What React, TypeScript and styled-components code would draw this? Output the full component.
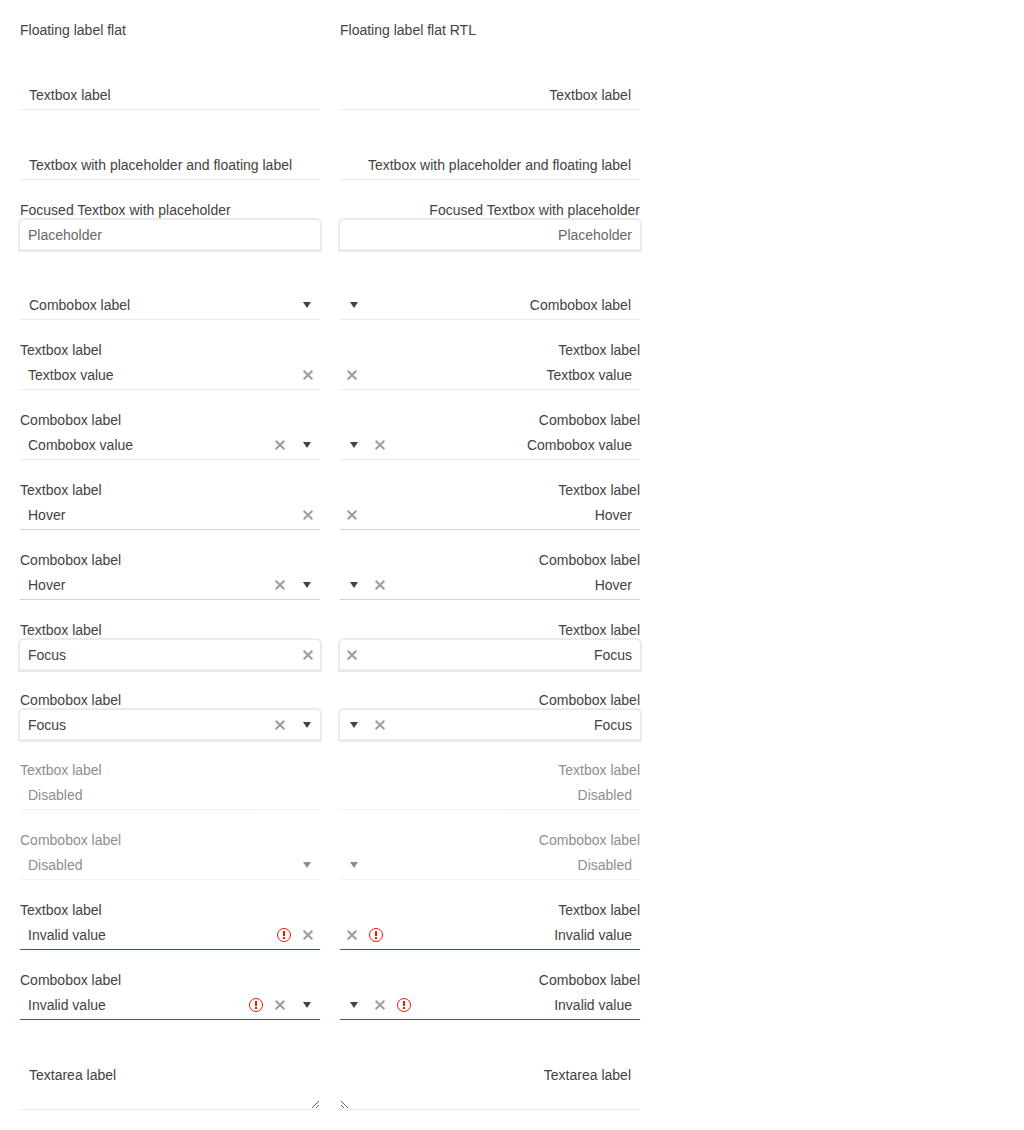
import React from 'react';
import styled, { createGlobalStyle, css } from 'styled-components';

type State = 'normal' | 'hover' | 'focus' | 'disabled' | 'invalid';
type Kind = 'textbox' | 'combobox' | 'textarea';

interface Field {
  kind: Kind;
  label: string;
  value?: string;
  placeholder?: string;
  state?: State;
}

const GlobalStyle = createGlobalStyle`
  body {
    margin: 0;
    background: #ffffff;
    color: #424242;
    font-family: "Liberation Sans", Arial, sans-serif;
    font-size: 14px;
    line-height: 20px;
  }
`;

const Page = styled.main`
  display: grid;
  grid-template-columns: 300px 300px;
  column-gap: 20px;
  padding: 20px;
`;

const Column = styled.section`
  display: flex;
  flex-direction: column;
  gap: 20px;
`;

const Heading = styled.div`
  height: 20px;
`;

const Container = styled.div<{ $disabled: boolean }>`
  display: flex;
  flex-direction: column;
  opacity: ${(p) => (p.$disabled ? 0.6 : 1)};
`;

const Label = styled.label`
  height: 20px;
  white-space: nowrap;
`;

const lineColor: Record<State, string> = {
  normal: '#ebebeb',
  hover: '#d2d2d2',
  focus: '#ebebeb',
  disabled: '#ebebeb',
  invalid: '#f31700',
};

const Box = styled.div<{ $state: State; $tall?: boolean }>`
  box-sizing: border-box;
  display: flex;
  align-items: ${(p) => (p.$tall ? 'stretch' : 'center')};
  height: ${(p) => (p.$tall ? 50 : 30)}px;
  position: relative;
  border-bottom: 1px solid ${(p) => lineColor[p.$state]};
  border-radius: ${(p) => (p.$state === 'focus' ? '4px 4px 0 0' : '0')};
  ${(p) =>
    p.$state === 'focus' &&
    css`
      box-shadow: 0 0 0 2px #ebebeb;
    `}
`;

const Value = styled.span<{ $muted: boolean }>`
  flex: 1;
  padding-inline: 8px;
  padding-top: 1px;
  color: ${(p) => (p.$muted ? '#686868' : 'inherit')};
`;

const RestingLabel = styled.span`
  flex: 1;
  padding-inline: 9px;
  padding-top: 1px;
`;

const AreaLabel = styled.span`
  position: absolute;
  top: 5px;
  inset-inline-start: 9px;
`;

const Area = styled.textarea`
  box-sizing: border-box;
  flex: 1;
  min-width: 0;
  margin: 0;
  padding: 4px 8px;
  border: 0;
  outline: 0;
  background: transparent;
  color: inherit;
  font: inherit;
  resize: both;
`;

const IconSlot = styled.span<{ $wide?: boolean; $shift?: boolean }>`
  box-sizing: border-box;
  display: flex;
  flex: none;
  align-items: center;
  justify-content: center;
  width: ${(p) => (p.$wide ? 28 : 24)}px;
  height: 30px;
  margin-bottom: -1px;
  padding-left: ${(p) => (p.$shift ? 2 : 0)}px;

  svg {
    display: block;
  }
`;

const ErrorIcon = () => (
  <IconSlot>
    <svg width="16" height="16" viewBox="0 0 16 16" fill="#f31700">
      <circle cx="8" cy="8" r="6.5" fill="none" stroke="#f31700" />
      <path d="M7 4h2v5H7zM7 10h2v2H7z" />
    </svg>
  </IconSlot>
);

const ClearIcon = () => (
  <IconSlot>
    <svg width="16" height="16" viewBox="0 0 16 16" fill="#424242" opacity="0.5">
      <path d="M13.1 4.4 11.6 2.9 8 6.5 4.4 2.9 2.9 4.4 6.5 8 2.9 11.6 4.4 13.1 8 9.5 11.6 13.1l1.5-1.5L9.5 8z" />
    </svg>
  </IconSlot>
);

const ArrowIcon = ({ shift }: { shift: boolean }) => (
  <IconSlot $wide $shift={shift}>
    <svg width="16" height="16" viewBox="0 0 16 16" fill="#424242">
      <path d="M4 5h8l-4 6z" />
    </svg>
  </IconSlot>
);

const fields: Field[] = [
  { kind: 'textbox', label: 'Textbox label' },
  { kind: 'textbox', label: 'Textbox with placeholder and floating label' },
  { kind: 'textbox', label: 'Focused Textbox with placeholder', placeholder: 'Placeholder', state: 'focus' },
  { kind: 'combobox', label: 'Combobox label' },
  { kind: 'textbox', label: 'Textbox label', value: 'Textbox value' },
  { kind: 'combobox', label: 'Combobox label', value: 'Combobox value' },
  { kind: 'textbox', label: 'Textbox label', value: 'Hover', state: 'hover' },
  { kind: 'combobox', label: 'Combobox label', value: 'Hover', state: 'hover' },
  { kind: 'textbox', label: 'Textbox label', value: 'Focus', state: 'focus' },
  { kind: 'combobox', label: 'Combobox label', value: 'Focus', state: 'focus' },
  { kind: 'textbox', label: 'Textbox label', value: 'Disabled', state: 'disabled' },
  { kind: 'combobox', label: 'Combobox label', value: 'Disabled', state: 'disabled' },
  { kind: 'textbox', label: 'Textbox label', value: 'Invalid value', state: 'invalid' },
  { kind: 'combobox', label: 'Combobox label', value: 'Invalid value', state: 'invalid' },
  { kind: 'textarea', label: 'Textarea label' },
];

const FloatingField = ({ field, rtl }: { field: Field; rtl: boolean }) => {
  const { kind, label, value, placeholder, state = 'normal' } = field;
  const text = value ?? placeholder;

  if (kind === 'textarea') {
    return (
      <Container $disabled={false}>
        <Label />
        <Box $state={state} $tall>
          <Area aria-label={label} />
          <AreaLabel>{label}</AreaLabel>
        </Box>
      </Container>
    );
  }

  return (
    <Container $disabled={state === 'disabled'}>
      <Label>{text ? label : null}</Label>
      <Box $state={state}>
        {text ? <Value $muted={!value}>{text}</Value> : <RestingLabel>{label}</RestingLabel>}
        {state === 'invalid' && <ErrorIcon />}
        {value && state !== 'disabled' && <ClearIcon />}
        {kind === 'combobox' && <ArrowIcon shift={!rtl} />}
      </Box>
    </Container>
  );
};

const FieldColumn = ({ title, rtl = false }: { title: string; rtl?: boolean }) => (
  <Column>
    <Heading>{title}</Heading>
    {fields.map((field, i) => (
      <div key={i} dir={rtl ? 'rtl' : 'ltr'}>
        <FloatingField field={field} rtl={rtl} />
      </div>
    ))}
  </Column>
);

export default function App() {
  return (
    <>
      <GlobalStyle />
      <Page>
        <FieldColumn title="Floating label flat" />
        <FieldColumn title="Floating label flat RTL" rtl />
      </Page>
    </>
  );
}
